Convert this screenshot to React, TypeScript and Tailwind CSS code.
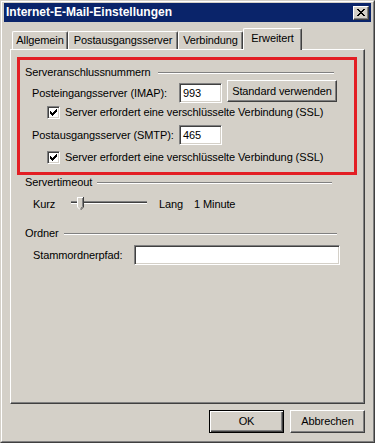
import React from 'react';

// classic Win2000 look: raised / sunken bevels
const raised =
  'border border-t-white border-l-white border-r-[#404040] border-b-[#404040] shadow-[inset_-1px_-1px_#808080] bg-[#d4d0c8]';
const sunken =
  'border border-t-[#808080] border-l-[#808080] border-r-white border-b-white shadow-[inset_1px_1px_#404040,inset_-1px_-1px_#d4d0c8] bg-white';
const etched = 'h-[2px] border-t border-b border-t-[#808080] border-b-white';

const CHECK = ['......X', '.....XX', 'X...XXX', 'XX.XXX.', 'XXXXX..', '.XXX...', '..X....'];
const CROSS = ['XX....XX', '.XX..XX.', '..XXXX..', '...XX...', '..XXXX..', '.XX..XX.', 'XX....XX'];

function Pixels({ rows }: { rows: string[] }) {
  const w = rows[0].length;
  const h = rows.length;
  return (
    <svg width={w} height={h} viewBox={`0 0 ${w} ${h}`} shapeRendering="crispEdges">
      {rows.flatMap((r, y) =>
        r.split('').map((c, x) => (c === 'X' ? <rect key={`${x}-${y}`} x={x} y={y} width={1} height={1} fill="#000" /> : null))
      )}
    </svg>
  );
}

function Checkbox() {
  return (
    <div className={`w-[13px] h-[13px] flex items-center justify-center ${sunken}`}>
      <Pixels rows={CHECK} />
    </div>
  );
}

function Tab({ label, width, active }: { label: string; width: string; active?: boolean }) {
  if (active) {
    return (
      <div
        className={`relative z-10 -mb-[1px] h-[22px] pb-[2px] ${width} flex items-center justify-center bg-[#d4d0c8] border-t border-l border-r border-t-white border-l-white border-r-[#404040] shadow-[inset_-1px_0_#808080] rounded-t-[2px]`}
      >
        {label}
      </div>
    );
  }
  return (
    <div
      className={`h-[18px] ${width} flex items-center justify-center border-t border-l border-r border-t-white border-l-white border-r-[#404040] shadow-[inset_-1px_0_#808080] rounded-t-[2px]`}
    >
      {label}
    </div>
  );
}

function Slider() {
  return (
    <svg width="80" height="14" viewBox="0 0 80 14" shapeRendering="crispEdges">
      <rect x="2" y="4" width="76" height="1" fill="#808080" />
      <rect x="2" y="5" width="76" height="1" fill="#404040" />
      <rect x="2" y="6" width="76" height="1" fill="#ffffff" />
      <g transform="translate(8,0)">
        <polygon points="0,0 6,0 6,10 3,13 0,10" fill="#d4d0c8" />
        <path d="M0.5 10 V0.5 H5.5" stroke="#fff" fill="none" />
        <path d="M6.5 0 V10 L3.5 13" stroke="#404040" fill="none" shapeRendering="auto" />
        <path d="M5.5 1 V9.5 L3.5 11.5" stroke="#808080" fill="none" shapeRendering="auto" />
        <path d="M0.5 10 L3 12.5" stroke="#fff" fill="none" shapeRendering="auto" />
      </g>
    </svg>
  );
}

export default function App() {
  return (
    <div className="w-[375px] h-[443px] bg-[#d4d0c8] text-black text-[11px] leading-[13px] tracking-[-0.1px] font-['Liberation_Sans',Arial,sans-serif] border border-t-[#d4d0c8] border-l-[#d4d0c8] border-r-[#404040] border-b-[#404040]">
      <div className="h-full border border-t-white border-l-white border-r-[#808080] border-b-[#808080] pt-[1px] px-[2px] flex flex-col">
        {/* Title bar */}
        <div className="h-[19px] bg-[#0a246a] flex items-center justify-between pl-[2px] pr-[2px]">
          <span className="text-white font-bold text-[12px] tracking-[0px]">Internet-E-Mail-Einstellungen</span>
          <button className={`w-[16px] h-[14px] flex items-center justify-center ${raised}`}>
            <Pixels rows={CROSS} />
          </button>
        </div>

        {/* Tabs */}
        <div className="mt-[6px] mx-[6px] pl-[2px] flex items-end">
          <Tab label="Allgemein" width="w-[56px]" />
          <Tab label="Postausgangsserver" width="w-[110px]" />
          <Tab label="Verbindung" width="w-[65px]" />
          <Tab label="Erweitert" width="w-[59px]" active />
        </div>

        {/* Tab panel */}
        <div className={`mx-[6px] h-[355px] ${raised} flex flex-col`}>
          {/* Serveranschlussnummern (red highlight) */}
          <div className="ml-[6px] mt-[7px] w-[340px] h-[118px] border-[3px] border-[#e31e24] flex flex-col">
            <div className="mt-[6px] h-[13px] pl-[5px] pr-[20px] flex items-center">
              <span>Serveranschlussnummern</span>
              <div className={`ml-[7px] flex-1 ${etched}`} />
            </div>

            <div className="mt-[1px] flex items-start">
              <div className="mt-[3px] flex items-center">
                <span className="pl-[12px] w-[159px]">Posteingangsserver (IMAP):</span>
                <div className={`w-[43px] h-[20px] px-[3px] flex items-center ${sunken}`}>993</div>
              </div>
              <button className={`ml-[5px] w-[110px] h-[22px] flex items-center justify-center ${raised}`}>
                Standard verwenden
              </button>
            </div>

            <div className="mt-[3px] h-[13px] pl-[27px] flex items-center">
              <Checkbox />
              <span className="ml-[5px]">Server erfordert eine verschlüsselte Verbindung (SSL)</span>
            </div>

            <div className="mt-[6px] flex items-center">
              <span className="pl-[12px] w-[159px]">Postausgangsserver (SMTP):</span>
              <div className={`w-[43px] h-[20px] px-[3px] flex items-center ${sunken}`}>465</div>
            </div>

            <div className="mt-[6px] h-[13px] pl-[27px] flex items-center">
              <Checkbox />
              <span className="ml-[5px]">Server erfordert eine verschlüsselte Verbindung (SSL)</span>
            </div>
          </div>

          {/* Servertimeout */}
          <div className="mt-[1px] h-[13px] pl-[14px] pr-[32px] flex items-center">
            <span>Servertimeout</span>
            <div className={`ml-[5px] flex-1 ${etched}`} />
          </div>
          <div className="mt-[8px] h-[14px] pl-[22px] flex items-center">
            <span className="w-[36px]">Kurz</span>
            <Slider />
            <span className="ml-[10px] w-[35px]">Lang</span>
            <span>1 Minute</span>
          </div>

          {/* Ordner */}
          <div className="mt-[16px] h-[13px] pl-[14px] pr-[27px] flex items-center">
            <span>Ordner</span>
            <div className={`ml-[5px] flex-1 ${etched}`} />
          </div>
          <div className="mt-[5px] flex items-center">
            <span className="pl-[22px] w-[123px]">Stammordnerpfad:</span>
            <div className={`w-[206px] h-[20px] ${sunken}`} />
          </div>
        </div>

        {/* Dialog buttons */}
        <div className="mt-[6px] mr-[6px] flex justify-end gap-[6px]">
          <button className="w-[75px] h-[23px] border border-black bg-[#d4d0c8] shadow-[inset_1px_1px_#fff,inset_-1px_-1px_#404040,inset_-2px_-2px_#808080] flex items-center justify-center">
            OK
          </button>
          <button className={`w-[75px] h-[23px] flex items-center justify-center ${raised}`}>Abbrechen</button>
        </div>
      </div>
    </div>
  );
}
